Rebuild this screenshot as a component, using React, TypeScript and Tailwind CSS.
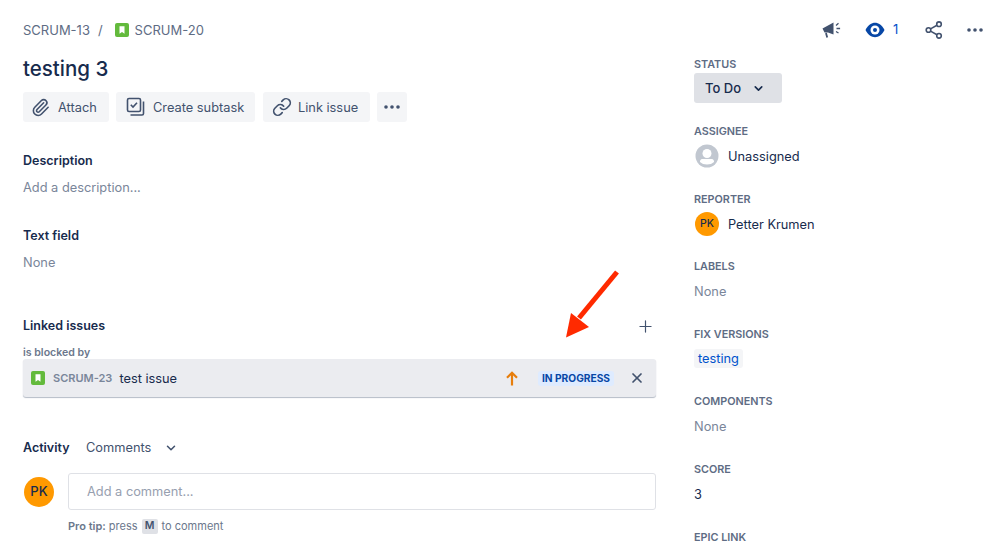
import React from "react";
import { Paperclip, Link, ChevronDown, Plus, X } from "lucide-react";

function StoryIcon() {
  return (
    <svg width="14" height="14" viewBox="0 0 14 14" className="shrink-0">
      <rect width="14" height="14" rx="2" fill="#63ba3c" />
      <path d="M4.5 3.2h5v7.6L7 8.9l-2.5 1.9z" fill="#fff" />
    </svg>
  );
}

function Dots({ color = "#42526e" }: { color?: string }) {
  return (
    <svg width="18" height="6" viewBox="0 0 18 6">
      <circle cx="3" cy="3" r="1.8" fill={color} />
      <circle cx="9" cy="3" r="1.8" fill={color} />
      <circle cx="15" cy="3" r="1.8" fill={color} />
    </svg>
  );
}

function Subtask() {
  return (
    <svg width="20" height="20" viewBox="0 0 20 20" fill="none" stroke="#42526e" strokeWidth="1.6">
      <rect x="1.5" y="1.5" width="13" height="13" rx="1.5" />
      <path d="M4.8 7.8l2.2 2.3 4-4.4" />
      <path d="M17.5 4.5v12a1.5 1.5 0 0 1-1.5 1.5H4.5" />
    </svg>
  );
}

function ActionButton({ icon, label, className }: { icon: React.ReactNode; label: string; className: string }) {
  return (
    <button className={`flex h-[30px] items-center rounded-[3px] bg-[#f4f5f7] text-[12.8px] text-[#42526e] ${className}`}>
      {icon}
      <span className="pt-[2px]">{label}</span>
    </button>
  );
}

function Field({ label, children, className = "" }: { label: string; children?: React.ReactNode; className?: string }) {
  return (
    <div className={`h-[67.6px] ${className}`}>
      <div className="h-4 text-[10.8px] leading-4 font-semibold text-[#5e6c84]">{label}</div>
      {children}
    </div>
  );
}

function Avatar({ size }: { size: "sm" | "lg" }) {
  return (
    <div
      className={
        size === "sm"
          ? "flex h-6 w-6 items-center justify-center rounded-full bg-[#ff9900] text-[10.5px] font-medium text-[#172b4d]"
          : "flex h-[30px] w-[30px] shrink-0 items-center justify-center rounded-full bg-[#ff9900] text-[13px] font-medium text-[#172b4d]"
      }
    >
      PK
    </div>
  );
}

export default function App() {
  return (
    <div className="relative flex h-[548px] w-[998px] overflow-hidden bg-white font-['Inter',sans-serif] text-[#172b4d]">
      <main className="w-[694px] shrink-0 pl-[23px] pr-[38px]">
        <div className="mt-[20px] flex h-[20px] items-center text-[13px] text-[#5e6c84]">
          <span className="pt-[2px]">SCRUM-13</span>
          <span className="ml-[8px] mr-[12px] pt-[2px]">/</span>
          <StoryIcon />
          <span className="ml-[6px] pt-[2px]">SCRUM-20</span>
        </div>

        <h1 className="mt-[15px] h-[28px] text-[20.5px] leading-7 font-medium">testing 3</h1>

        <div className="mt-[9px] flex">
          <ActionButton className="w-[86px] gap-[8px] pl-[8px]" icon={<Paperclip size={19} color="#42526e" />} label="Attach" />
          <ActionButton className="ml-[7px] w-[139px] gap-[7px] pl-[10px]" icon={<Subtask />} label="Create subtask" />
          <ActionButton className="ml-[8px] w-[107px] gap-[6px] pl-[9px]" icon={<Link size={20} color="#42526e" />} label="Link issue" />
          <button className="ml-[7px] flex h-[30px] w-[30px] items-center justify-center rounded-[3px] bg-[#f4f5f7]">
            <Dots />
          </button>
        </div>

        <section className="mt-[29px]">
          <h2 className="h-[20px] text-[12.5px] leading-5 font-semibold">Description</h2>
          <p className="mt-[7px] h-[20px] text-[12.8px] leading-5 text-[#7a869a]">Add a description...</p>
        </section>

        <section className="mt-[28px]">
          <h2 className="h-[20px] text-[12.5px] leading-5 font-semibold">Text field</h2>
          <p className="mt-[7px] h-[20px] text-[12.8px] leading-5 text-[#7a869a]">None</p>
        </section>

        <section className="mt-[43px]">
          <div className="flex h-[20px] items-center justify-between">
            <h2 className="text-[12.5px] font-semibold">Linked issues</h2>
            <Plus size={19} color="#42526e" strokeWidth={1.5} className="mr-[1.5px]" />
          </div>
          <div className="mt-[11px] h-[12px] text-[10.6px] leading-[12px] font-semibold text-[#6b778c]">is blocked by</div>
          <div className="flex h-[38px] items-center rounded-[3px] bg-[#ebecf0] pl-[8px] pr-[11px] shadow-[0_1px_1px_rgba(9,30,66,0.3)]">
            <StoryIcon />
            <span className="ml-[8px] pt-[1px] text-[11px] font-semibold text-[#7a869a]">SCRUM-23</span>
            <span className="ml-[7px] pt-[2px] text-[12.8px]">test issue</span>
            <svg width="12" height="15" viewBox="0 0 12 15" fill="none" stroke="#e77e0c" strokeWidth="2.2" className="ml-auto">
              <path d="M6 14.500V2M1 6.800L6 1.800l5 5" />
            </svg>
            <span className="ml-[20px] rounded-[3px] bg-[#deebff] px-[4px] text-[10.2px] leading-[15px] font-bold text-[#0747a6]">IN PROGRESS</span>
            <X size={16} color="#42526e" strokeWidth={2.6} className="ml-[15px]" />
          </div>
        </section>

        <section className="mt-[40px]">
          <div className="flex h-[20px] items-center pt-[2px]">
            <h2 className="w-[63px] text-[12.5px] font-semibold">Activity</h2>
            <span className="text-[12.8px] text-[#42526e]">Comments</span>
            <ChevronDown size={14} color="#42526e" strokeWidth={2.6} className="ml-[13px]" />
          </div>
          <div className="mt-[16px] flex items-center pl-[1px]">
            <Avatar size="lg" />
            <div className="ml-[14px] flex h-[37px] flex-1 items-center rounded-[3px] border border-[#dfe1e6] pl-[18px] text-[12.8px] text-[#97a0af]">
              Add a comment...
            </div>
          </div>
          <div className="mt-[8px] flex h-[16px] items-center pl-[45px] text-[11px] text-[#6b778c]">
            <strong className="font-semibold">Pro tip:</strong>
            <span className="ml-[3px]">press</span>
            <kbd className="mx-[4px] flex h-[15px] w-[16px] items-center justify-center rounded-[2px] bg-[#dfe1e6] font-['Inter',sans-serif] text-[10.5px] font-semibold text-[#42526e]">M</kbd>
            <span>to comment</span>
          </div>
        </section>
      </main>

      <aside className="flex-1">
        <div className="mt-[20px] flex h-[20px] items-center">
          <svg width="20" height="18" viewBox="0 0 20 18" className="ml-[128px]">
            <path d="M0.5 7.5L11.5 1.500v12L6 11.500H2.500z" fill="#42526e" />
            <path d="M4 12l1.200 4.500" stroke="#42526e" strokeWidth="1.800" />
            <path d="M14 4.500l2.500-2.200M14.500 7.500h3.600M14 10.500l2.500 1.500" stroke="#42526e" strokeWidth="1.300" />
          </svg>
          <svg width="20" height="16" viewBox="0 0 20 16" className="ml-[23px]">
            <path d="M0.5 8C3 3 6.500 0.800 10 0.800S17 3 19.500 8C17 13 13.500 15.200 10 15.200S3 13 0.500 8z" fill="#0747a6" />
            <circle cx="10" cy="8" r="4.500" fill="#fff" />
            <circle cx="10" cy="8" r="2" fill="#0747a6" />
          </svg>
          <span className="ml-[8px] text-[13px] text-[#0052cc]">1</span>
          <svg width="18" height="18" viewBox="0 0 18 18" fill="none" stroke="#42526e" strokeWidth="1.600" className="ml-[27px]">
            <circle cx="3.500" cy="9" r="2.300" />
            <circle cx="14" cy="3.200" r="2.300" />
            <circle cx="14" cy="14.800" r="2.300" />
            <path d="M5.500 7.900L12 4.300M5.500 10.100L12 13.700" />
          </svg>
          <span className="ml-[23px]"><Dots /></span>
        </div>

        <div className="mt-[17px] h-4 text-[10.8px] leading-4 font-semibold text-[#5e6c84]">STATUS</div>
        <button className="flex h-[30px] w-[88px] items-center rounded-[3px] bg-[#dfe1e6] pl-[11px] text-[13px] font-medium">
          <span className="pt-[2px]">To Do</span>
          <ChevronDown size={13} strokeWidth={3} className="ml-[11px]" />
        </button>

        <div className="mt-[21px]">
          <Field label="ASSIGNEE">
            <div className="mt-[4px] flex items-center gap-[9px] pl-[1px] text-[12.8px]">
              <svg width="24" height="24" viewBox="0 0 24 24">
                <circle cx="12" cy="12" r="11.500" fill="#c1c7d0" />
                <circle cx="12" cy="9.500" r="4.500" fill="#fff" />
                <path d="M5 17.500c0-2 1.500-2.500 3-2.500h8c1.500 0 3 .5 3 2.500V18c-1.700 1.700-4.200 2.500-7 2.500S6.700 19.700 5 18z" fill="#fff" />
              </svg>
              <span className="pt-[2px]">Unassigned</span>
            </div>
          </Field>
          <Field label="REPORTER">
            <div className="mt-[4px] flex items-center gap-[9px] pl-[1px] text-[12.8px]">
              <Avatar size="sm" />
              <span className="pt-[2px]">Petter Krumen</span>
            </div>
          </Field>
          <Field label="LABELS">
            <p className="mt-[7px] text-[12.8px] leading-5 text-[#7a869a]">None</p>
          </Field>
          <Field label="FIX VERSIONS">
            <span className="mt-[6px] inline-block h-[19px] rounded-[3px] bg-[#f4f5f7] px-[4px] text-[12.8px] leading-[19px] text-[#0052cc]">testing</span>
          </Field>
          <Field label="COMPONENTS">
            <p className="mt-[7px] text-[12.8px] leading-5 text-[#7a869a]">None</p>
          </Field>
          <Field label="SCORE">
            <p className="mt-[7px] text-[12.8px] leading-5">3</p>
          </Field>
          <Field label="EPIC LINK" />
        </div>
      </aside>

      <svg width="60" height="72" viewBox="0 0 60 72" className="absolute left-[564px] top-[268px]">
        <path d="M53 4L15 50" stroke="#ff2a00" strokeWidth="5" fill="none" />
        <path d="M2 69.500L7 45L25 59z" fill="#ff2a00" />
      </svg>
    </div>
  );
}
